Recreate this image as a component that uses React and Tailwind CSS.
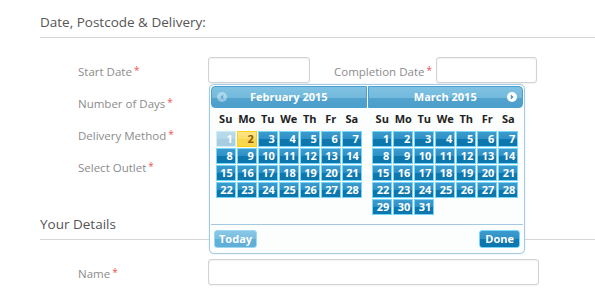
import React from "react";

const WEEK = ["Su", "Mo", "Tu", "We", "Th", "Fr", "Sa"];

// month grids, both months start on a Sunday
const february = Array.from({ length: 28 }, (_, i) => i + 1);
const march = Array.from({ length: 31 }, (_, i) => i + 1);

function Req({ children }) {
  return (
    <span className="text-[11.5px] text-[#8c8c8c]">
      {children}
      <span className="relative -top-[2px] ml-[2px] text-[10px] text-[#ee5555]">*</span>
    </span>
  );
}

function Input({ className }) {
  return (
    <div
      className={`h-[26px] rounded-[3px] border border-[#d2d2d2] bg-white shadow-[inset_0_1px_2px_rgba(0,0,0,0.06),0_1px_1px_rgba(0,0,0,0.05)] ${className}`}
    />
  );
}

function Day({ n, state }) {
  if (state === "disabled") {
    return (
      <div className="h-[16px] border border-[#77d5f7] bg-[linear-gradient(to_bottom,#3d9bcd_0%,#2d90c6_50%,#0e77ae_50%,#0c76ad_100%)] pr-[2px] text-right text-[11px] font-bold leading-[14px] text-white opacity-35">
        {n}
      </div>
    );
  }
  if (state === "today") {
    return (
      <div className="h-[16px] border border-[#fcd113] bg-[linear-gradient(to_bottom,#fbe48a_0%,#f9dd66_50%,#f8d849_50%,#f8d74a_100%)] pr-[2px] text-right text-[11px] font-bold leading-[14px] text-[#915608]">
        {n}
      </div>
    );
  }
  return (
    <div className="h-[16px] border border-[#77d5f7] bg-[linear-gradient(to_bottom,#3d9bcd_0%,#2d90c6_50%,#0e77ae_50%,#0c76ad_100%)] pr-[2px] text-right text-[11px] font-bold leading-[14px] text-white">
      {n}
    </div>
  );
}

function Month({ title, days, side }) {
  return (
    <div>
      <div
        className={`relative flex h-[22px] items-center justify-center border border-[#4a9fd0] bg-[linear-gradient(to_bottom,#80c2e2_0%,#72b9dc_55%,#52a3ce_55%,#4c9fcb_100%)] text-[11px] font-bold text-white ${
          side === "left" ? "rounded-l-[4px]" : "rounded-r-[4px]"
        }`}
      >
        {side === "left" ? (
          <svg className="absolute left-[5px] top-[5px] opacity-40" width="10" height="10" viewBox="0 0 10 10">
            <circle cx="5" cy="5" r="5" fill="#ffffff" />
            <path d="M6.2 2.6 L3.4 5 L6.2 7.4 Z" fill="#4b9ecb" />
          </svg>
        ) : (
          <svg className="absolute right-[5px] top-[5px]" width="10" height="10" viewBox="0 0 10 10">
            <circle cx="5" cy="5" r="5" fill="#ffffff" />
            <path d="M3.8 2.6 L6.6 5 L3.8 7.4 Z" fill="#3f95c5" />
          </svg>
        )}
        {title}
      </div>

      <div className="flex justify-center">
        <div className="w-[146px]">
          <div className="grid h-[23px] grid-cols-7 items-center gap-x-[1px] text-center text-[11px] font-bold text-[#222]">
            {WEEK.map((w) => (
              <span key={w}>{w}</span>
            ))}
          </div>
          <div className="grid grid-cols-7 gap-[1px]">
            {days.map((d) => (
              <Day
                key={d}
                n={d}
                state={side === "left" && d === 1 ? "disabled" : side === "left" && d === 2 ? "today" : "default"}
              />
            ))}
          </div>
        </div>
      </div>
    </div>
  );
}

function DatePicker() {
  return (
    <div className="absolute left-[209px] top-[84px] w-[316px] rounded-[5px] border border-[#a6c9e2] bg-[#fcfdfd] px-[1px] pt-[1px] shadow-[0_0_2px_rgba(120,180,220,0.35)]">
      <div className="grid h-[138px] grid-cols-2 gap-x-[1px]">
        <Month title="February 2015" days={february} side="left" />
        <Month title="March 2015" days={march} side="right" />
      </div>
      <div className="flex items-center justify-between border-t border-[#a6c9e2] pb-[5px] pl-[3px] pr-[3px] pt-[5px]">
        <button className="h-[18px] rounded-[3px] border border-[#9bd9f3] bg-[linear-gradient(to_bottom,#88c7e6_0%,#79bde0_50%,#60b0d9_50%,#5fafd8_100%)] px-[4px] text-[11px] font-bold leading-[16px] text-white">
          Today
        </button>
        <button className="h-[18px] rounded-[3px] border border-[#77d5f7] bg-[linear-gradient(to_bottom,#3d9bcd_0%,#2d90c6_50%,#0e77ae_50%,#0c76ad_100%)] px-[5px] text-[11px] font-bold leading-[16px] text-white">
          Done
        </button>
      </div>
    </div>
  );
}

export default function App() {
  return (
    <div className="relative h-[290px] w-[595px] overflow-hidden bg-white font-['Open_Sans',sans-serif]">
      {/* Date section */}
      <div className="ml-[40px] border-b border-[#d6d6d6] pb-[5px] pt-[12px] text-[13.5px] leading-[20px] text-[#555]">
        Date, Postcode &amp; Delivery:
      </div>

      <div className="mt-[16px] pl-[78px]">
        <div className="flex h-[32px] items-center">
          <div className="w-[130px]">
            <Req>Start Date</Req>
          </div>
          <Input className="w-[102px]" />
          <div className="ml-[24px] w-[102px]">
            <Req>Completion Date</Req>
          </div>
          <Input className="w-[101px]" />
        </div>
        <div className="flex h-[32px] items-center">
          <div className="w-[130px]">
            <Req>Number of Days</Req>
          </div>
        </div>
        <div className="flex h-[32px] items-center">
          <div className="w-[130px]">
            <Req>Delivery Method</Req>
          </div>
        </div>
        <div className="flex h-[32px] items-center">
          <div className="w-[130px]">
            <Req>Select Outlet</Req>
          </div>
        </div>
      </div>

      {/* Details section */}
      <div className="ml-[40px] mt-[32px] border-b border-[#d6d6d6] pb-[5px] text-[13.5px] leading-[20px] text-[#555]">
        Your Details
      </div>

      <div className="mt-[16px] pl-[78px]">
        <div className="flex h-[32px] items-center">
          <div className="w-[130px]">
            <Req>Name</Req>
          </div>
          <Input className="w-[331px]" />
        </div>
      </div>

      <DatePicker />
    </div>
  );
}
